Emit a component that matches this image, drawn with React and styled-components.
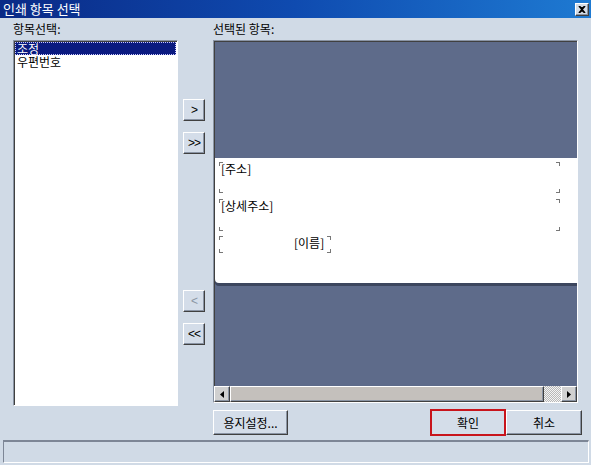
import React from 'react';
import styled, { createGlobalStyle, css } from 'styled-components';

const GlobalStyle = createGlobalStyle`
  html, body { margin: 0; padding: 0; }
  body {
    background: #d0dae6;
    font-family: "Noto Sans CJK KR", "DejaVu Sans", sans-serif;
    font-size: 12px;
    color: #000;
  }
`;

const raised = css`
  border-top: 1px solid #ffffff;
  border-left: 1px solid #ffffff;
  border-right: 1px solid #404040;
  border-bottom: 1px solid #404040;
  box-shadow: inset -1px -1px 0 #8a94a4;
`;

const sunken = css`
  border-top: 1px solid #8a94a4;
  border-left: 1px solid #8a94a4;
  border-right: 1px solid #ffffff;
  border-bottom: 1px solid #ffffff;
  box-shadow: inset 1px 1px 0 #404040;
`;

const Window = styled.div`
  width: 591px;
  height: 465px;
  background: #d0dae6;
  display: flex;
  flex-direction: column;
  box-sizing: border-box;
  overflow: hidden;
`;

const TitleBar = styled.div`
  height: 18px;
  flex: none;
  display: flex;
  align-items: center;
  justify-content: space-between;
  padding: 0 2px 0 3px;
  background: linear-gradient(90deg, #0a2a86 0%, #0f4bb0 50%, #1e7ad2 100%);
  color: #fff;
  font-size: 13px;
  line-height: 18px;
`;

const CloseButton = styled.div`
  width: 12px;
  height: 11px;
  ${raised};
  background: #d4dce6;
  display: flex;
  align-items: center;
  justify-content: center;
`;

const Main = styled.div`
  flex: 1;
  display: flex;
  padding: 4px 0 0 13px;
`;

const Column = styled.div`
  display: flex;
  flex-direction: column;
  width: ${p => p.$width}px;
`;

const Label = styled.div`
  height: 18px;
  line-height: 14px;
  font-size: 12px;
`;

const ListBox = styled.div`
  height: 362px;
  background: #fff;
  ${sunken};
  padding: 1px;
`;

const ListItem = styled.div`
  height: 13px;
  line-height: 13px;
  padding-left: 2px;
  font-size: 12px;
  ${p => p.$selected && css`
    background: #0a1a80;
    color: #fff;
    outline: 1px dotted #c8c8ff;
    outline-offset: -1px;
  `}
`;

const ArrowColumn = styled.div`
  width: 22px;
  margin: 18px 8px 0 5px;
  display: flex;
  flex-direction: column;
  gap: 11px;
  padding-top: 59px;
`;

const ArrowGap = styled.div`
  height: 114px;
`;

const ArrowButton = styled.div`
  width: 20px;
  height: 20px;
  ${raised};
  background: #d4dde9;
  display: flex;
  align-items: center;
  justify-content: center;
  font-family: "Liberation Sans", sans-serif;
  font-size: 12px;
  color: ${p => (p.$disabled ? '#8c96a4' : '#000')};
  letter-spacing: -1px;
`;

const Preview = styled.div`
  height: 361px;
  ${sunken};
  background: #5e6b8a;
  display: flex;
  flex-direction: column;
`;

const Canvas = styled.div`
  flex: 1;
  padding-top: 117px;
  padding-left: 1px;
  overflow: hidden;
`;

const Card = styled.div`
  position: relative;
  width: 380px;
  height: 125px;
  background: #fff;
  border-bottom-left-radius: 4px;
  box-shadow: 0 3px 0 #3c465e;
`;

const Field = styled.div`
  position: absolute;
  left: ${p => p.$x}px;
  top: ${p => p.$y}px;
  width: ${p => p.$w}px;
  height: ${p => p.$h}px;
`;

const FieldText = styled.span`
  position: absolute;
  left: ${p => p.$x || 2}px;
  top: 0;
  line-height: 14px;
  font-size: 12px;
  white-space: nowrap;
`;

const Corner = styled.span`
  position: absolute;
  width: 3px;
  height: 3px;
  border-color: #777;
  border-style: solid;
  border-width: 0;
  ${p => p.$pos === 'tl' && css`left: 0; top: 0; border-left-width: 1px; border-top-width: 1px;`}
  ${p => p.$pos === 'tr' && css`right: 0; top: 0; border-right-width: 1px; border-top-width: 1px;`}
  ${p => p.$pos === 'bl' && css`left: 0; bottom: 0; border-left-width: 1px; border-bottom-width: 1px;`}
  ${p => p.$pos === 'br' && css`right: 0; bottom: 0; border-right-width: 1px; border-bottom-width: 1px;`}
`;

const ScrollBar = styled.div`
  height: 16px;
  display: flex;
  background: #c8c4c0;
`;

const ScrollArrow = styled.div`
  width: 14px;
  height: 14px;
  ${raised};
  background: #d0d0d0;
  display: flex;
  align-items: center;
  justify-content: center;
`;

const Thumb = styled.div`
  width: 312px;
  height: 14px;
  ${raised};
  background: #c4c0bc;
`;

const Track = styled.div`
  flex: 1;
  background-color: #e8e8e8;
  background-image: repeating-conic-gradient(#b8b8b8 0 25%, #f4f4f4 0 50%);
  background-size: 2px 2px;
`;

const ButtonRow = styled.div`
  display: flex;
  align-items: center;
  margin-top: 6px;
  width: 369px;
`;

const PushButton = styled.div`
  box-sizing: border-box;
  width: ${p => p.$width}px;
  height: ${p => (p.$default ? 27 : 25)}px;
  ${raised};
  background: #d4dde9;
  display: flex;
  align-items: center;
  justify-content: center;
  font-size: 12px;
  ${p => p.$default && css`
    border: 2px solid #c8141c;
    box-shadow: none;
  `}
`;

const Spacer = styled.div`
  flex: 1;
`;

const StatusBar = styled.div`
  height: 20px;
  margin: 0 2px 2px 3px;
  border-top: 2px solid #7d8696;
  border-left: 1px solid #7d8696;
  border-right: 1px solid #fff;
  border-bottom: 1px solid #fff;
  background: #d0dae6;
`;

const fields = [
  { x: 4, y: 4, w: 341, h: 31, text: '[주소]' },
  { x: 4, y: 41, w: 341, h: 32, text: '[상세주소]' },
  { x: 4, y: 78, w: 112, h: 17, text: '[이름]', tx: 75 },
];

const Arrow = ({ dir }) => (
  <svg width="4" height="7" viewBox="0 0 4 7">
    <path d={dir === 'left' ? 'M4 0 L0 3.5 L4 7 Z' : 'M0 0 L4 3.5 L0 7 Z'} fill="#000" />
  </svg>
);

const App = () => (
  <>
    <GlobalStyle />
    <Window>
      <TitleBar>
        <span>인쇄 항목 선택</span>
        <CloseButton>
          <svg width="8" height="7" viewBox="0 0 8 7">
            <path d="M1 0 L4 2.5 L7 0 M1 7 L4 4.5 L7 7 M1 0 L7 7 M7 0 L1 7" stroke="#000" strokeWidth="1.6" fill="none" />
          </svg>
        </CloseButton>
      </TitleBar>
      <Main>
        <Column $width={165}>
          <Label>항목선택:</Label>
          <ListBox>
            <ListItem $selected>조정</ListItem>
            <ListItem>우편번호</ListItem>
          </ListBox>
        </Column>
        <ArrowColumn>
          <ArrowButton>&gt;</ArrowButton>
          <ArrowButton>&gt;&gt;</ArrowButton>
          <ArrowGap />
          <ArrowButton $disabled>&lt;</ArrowButton>
          <ArrowButton>&lt;&lt;</ArrowButton>
        </ArrowColumn>
        <Column $width={365}>
          <Label>선택된 항목:</Label>
          <Preview>
            <Canvas>
              <Card>
                {fields.map(f => (
                  <Field key={f.text} $x={f.x} $y={f.y} $w={f.w} $h={f.h}>
                    <Corner $pos="tl" />
                    <Corner $pos="tr" />
                    <Corner $pos="bl" />
                    <Corner $pos="br" />
                    <FieldText $x={f.tx}>{f.text}</FieldText>
                  </Field>
                ))}
              </Card>
            </Canvas>
            <ScrollBar>
              <ScrollArrow><Arrow dir="left" /></ScrollArrow>
              <Thumb />
              <Track />
              <ScrollArrow><Arrow dir="right" /></ScrollArrow>
            </ScrollBar>
          </Preview>
          <ButtonRow>
            <PushButton $width={75}>용지설정...</PushButton>
            <Spacer />
            <PushButton $width={76} $default>확인</PushButton>
            <PushButton $width={76}>취소</PushButton>
          </ButtonRow>
        </Column>
      </Main>
      <StatusBar />
    </Window>
  </>
);

export default App;
